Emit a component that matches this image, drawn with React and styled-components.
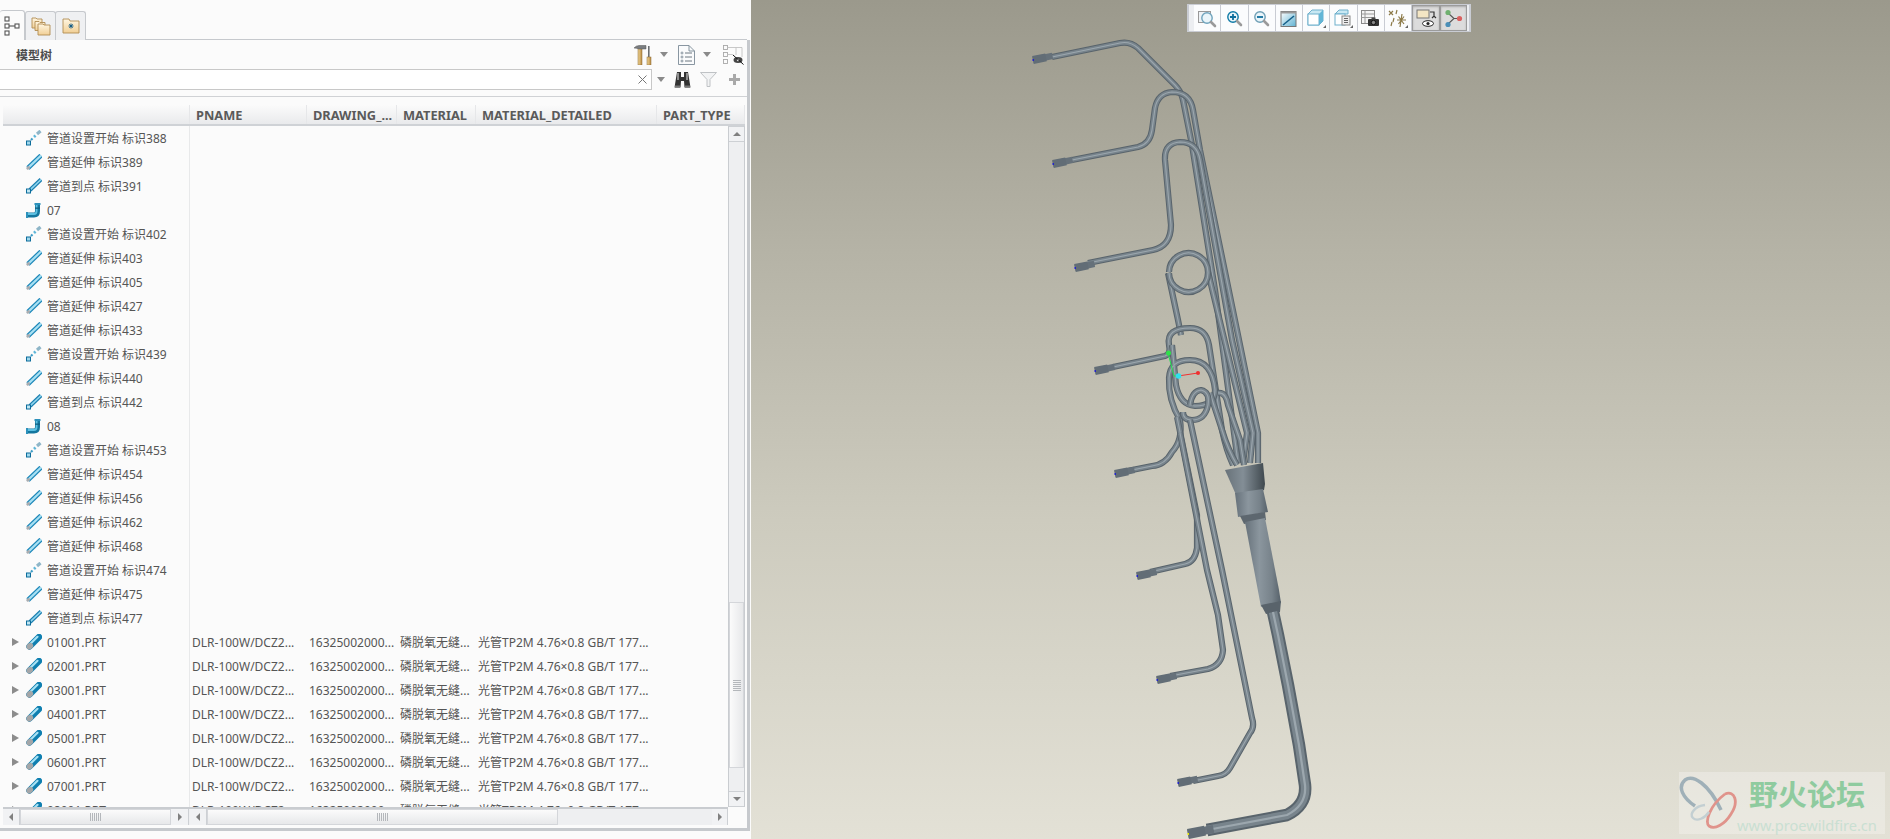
import React from "react";
import styled, { createGlobalStyle } from "styled-components";

const Global = createGlobalStyle`
  html, body { margin: 0; padding: 0; background: #fbfbfb; }
  body { font-family: "Noto Sans", "Noto Sans CJK SC", sans-serif; font-size: 12px; color: #555; }
`;

const Page = styled.div`
  display: flex; width: 1890px; height: 839px; overflow: hidden;
`;
const Panel = styled.aside`
  width: 751px; flex: none; height: 839px; background: #fbfbfb;
  display: flex; flex-direction: column; box-sizing: border-box;
`;
const TabStrip = styled.div`
  height: 40px; box-sizing: border-box; padding-top: 10px; display: flex; align-items: flex-end;
  border-bottom: 1px solid #c6c9cd; margin-right: 4px;
`;
const Tab = styled.div`
  width: ${p => p.$w}px; box-sizing: border-box; display: flex; align-items: center; justify-content: center;
  border: 1px solid #c6c9cd; border-left: ${p => p.$active ? "none" : "1px solid #c6c9cd"};
  border-bottom: none; border-radius: 3px 3px 0 0; margin-bottom: -1px; margin-right: ${p => p.$active ? 0 : -1}px;
  background: ${p => p.$active ? "#fbfbfb" : "#eff0f2"};
  height: ${p => p.$active ? 30 : 29}px;
`;
const Frame = styled.div`
  height: 788px; width: 747px; border-right: 3px solid #c6c9cd; border-bottom: 3px solid #c6c9cd;
  display: flex; flex-direction: column; box-sizing: content-box;
`;
const TitleRow = styled.div`
  height: 29px; display: flex; align-items: center; padding: 0 3px 0 16px;
`;
const Title = styled.span`
  font-weight: 700; font-size: 12px; color: #4d4d4d; margin-right: auto;
`;
const ToolIcon = styled.span`
  display: inline-flex; margin-left: ${p => p.$ml || 0}px;
`;
const Caret = styled.span`
  width: 0; height: 0; border-left: 4px solid transparent; border-right: 4px solid transparent; border-top: 5px solid #8a8a8a;
  margin-left: ${p => p.$ml}px;
`;
const SearchRow = styled.div`
  height: 21px; display: flex; align-items: center;
`;
const SearchBox = styled.div`
  width: 652px; height: 21px; box-sizing: border-box; border: 1px solid #c8c8c8; border-left: none; background: #fff;
  display: flex; align-items: center; justify-content: flex-end; padding-right: 4px; flex: none;
`;
const Divider = styled.div`
  height: 1px; background: #d0d2d5; margin-top: 6px;
`;
const Table = styled.div`
  margin: 8px 2px 0 3px; flex: 1; display: flex; flex-direction: column; min-height: 0;
`;
const HeadRow = styled.div`
  display: grid; grid-template-columns: 187px 117px 90px 79px 181px 1fr; height: 21px; flex: none; box-sizing: border-box;
  background: linear-gradient(#fbfbfb, #e9eaec); border-bottom: 2px solid #cfd2d6;
`;
const HeadCell = styled.div`
  font-weight: 700; font-size: 12.8px; color: #5a5a5a; padding-left: ${p => p.$first ? 0 : 6}px; line-height: 21px; white-space: nowrap;
  border-right: 1px solid #e6e7e9; overflow: hidden;
`;
const BodyWrap = styled.div`
  height: 681px; display: flex; flex: none;
`;
const Rows = styled.div`
  width: 725px; height: 681px; overflow: hidden; flex: none;
  background: linear-gradient(to right, transparent 186px, #e8e9ea 186px, #e8e9ea 187px, transparent 187px);
`;
const Row = styled.div`
  display: grid; grid-template-columns: 187px 117px 90px 79px 181px 1fr; height: 24px; align-items: center;
`;
const TreeCell = styled.div`
  display: flex; align-items: center; padding-left: 9px; height: 24px; white-space: nowrap;
`;
const Expander = styled.span`
  width: 0; height: 0; border-top: 4px solid transparent; border-bottom: 4px solid transparent; border-left: 7px solid #8c8c8c;
  margin-right: 7px;
`;
const NoExpander = styled.span`width: 14px; flex: none;`;
const Label = styled.span`margin-left: 5px; font-size: 12px; color: #555;`;
const Cell = styled.div`
  white-space: nowrap; overflow: hidden; padding-left: ${p => p.$pad}px; font-size: 12px; color: #555;
`;
const VScroll = styled.div`
  width: 17px; flex: none; height: 681px; display: flex; flex-direction: column; background: #eeeff1;
  border-left: 1px solid #c9ccd0; border-right: 1px solid #c9ccd0; box-sizing: border-box;
`;
const VButton = styled.div`
  height: 16px; flex: none; display: flex; align-items: center; justify-content: center; background: #f1f2f4;
  border-bottom: 1px solid #cdd0d4; border-top: 1px solid #cdd0d4; box-sizing: border-box;
`;
const ArrowUp = styled.span`
  width: 0; height: 0; border-left: 4px solid transparent; border-right: 4px solid transparent; border-bottom: 4px solid #808080;
`;
const ArrowDown = styled.span`
  width: 0; height: 0; border-left: 4px solid transparent; border-right: 4px solid transparent; border-top: 4px solid #808080;
`;
const VTrack = styled.div`
  flex: 1; padding-top: 460px; display: flex; flex-direction: column; box-sizing: border-box;
`;
const VThumb = styled.div`
  height: 166px; background: linear-gradient(to right, #fbfbfb, #e7e8ea); border: 1px solid #d4d6da; box-sizing: border-box;
  display: flex; align-items: center; justify-content: center; flex: none; margin-bottom: 23px;
`;
const GripV = styled.div`
  width: 8px; height: 11px;
  background: repeating-linear-gradient(to bottom, #b4b7bb 0, #b4b7bb 1px, transparent 1px, transparent 2px);
`;
const GripH = styled.div`
  width: 11px; height: 8px;
  background: repeating-linear-gradient(to right, #b4b7bb 0, #b4b7bb 1px, transparent 1px, transparent 2px);
`;
const HBar = styled.div`
  height: 18px; display: flex; flex: none; box-sizing: border-box; border-top: 2px solid #c9ccd0; width: 725px; background: #eeeff1;
`;
const HSeg = styled.div`
  display: flex; width: ${p => p.$w}px; flex: none; margin-right: ${p => p.$mr || 0}px;
`;
const HButton = styled.div`
  width: ${p => p.$w}px; flex: none; display: flex; align-items: center; justify-content: center; background: #f1f2f4;
  border-right: 1px solid #cdd0d4; box-sizing: border-box;
`;
const ArrowL = styled.span`
  width: 0; height: 0; border-top: 4px solid transparent; border-bottom: 4px solid transparent; border-right: 4px solid #808080;
`;
const ArrowR = styled.span`
  width: 0; height: 0; border-top: 4px solid transparent; border-bottom: 4px solid transparent; border-left: 4px solid #808080;
`;
const HThumb = styled.div`
  width: ${p => p.$w}px; flex: none; background: linear-gradient(#fbfbfb, #e7e8ea); border: 1px solid #d4d6da; box-sizing: border-box;
  display: flex; align-items: center; justify-content: center;
`;
const HSpacer = styled.div`flex: 1;`;

const Viewport = styled.main`
  flex: 1; position: relative; height: 839px; overflow: hidden;
  background: linear-gradient(#9b998c 0%, #b5b3a6 30%, #cdcbbe 62%, #e3e1d6 100%);
`;
const Scene = styled.svg`
  display: block; width: 1139px; height: 839px;
`;
const Toolbar = styled.div`
  position: absolute; left: 436px; top: 4px; height: 28px; width: 284px; box-sizing: border-box;
  display: flex; padding: 0 5px; background: #eceef1; border: 2px solid #c9ccd3; border-width: 1px 2px;
`;
const ToolButton = styled.div`
  width: 27.3px; flex: none; display: flex; align-items: center; justify-content: center; box-sizing: border-box; background: ${p => p.$on ? "#dcdcdc" : "#fbfcfd"};
  border-right: 1px solid #c9ccd3; ${p => p.$on ? "border: 1px solid #9b9b9b; box-shadow: inset 0 1px 2px #aaa;" : ""}
`;
const Watermark = styled.div`
  position: absolute; right: 5px; bottom: 5px; width: 206px; height: 62px; background: rgba(255,255,255,.28);
  display: flex;
`;
const Butterfly = styled.svg`
  width: 58px; height: 62px; flex: none;
`;
const WmText = styled.div`
  display: flex; flex-direction: column; flex: 1; align-items: flex-start; min-width: 0;
`;
const WmTitle = styled.div`
  font: 700 29px "Noto Sans CJK SC", sans-serif; color: #8fcb9f; line-height: 32px; margin: 5px 0 0 12px; white-space: nowrap;
`;
const WmUrl = styled.div`
  font: 14.6px "Noto Sans", sans-serif; color: #c9dfd2; white-space: nowrap; margin: 6px 0 0 0; line-height: 20px;
`;

const Grads = () => (
  <svg width="0" height="0" style={{ position: "absolute" }}>
    <defs>
      <linearGradient id="folder" x1="0" y1="0" x2="0" y2="1">
        <stop offset="0" stopColor="#fff6e2" /><stop offset="1" stopColor="#f1cf95" />
      </linearGradient>
      <linearGradient id="collar" x1="0" y1="0" x2="1" y2="0">
        <stop offset="0" stopColor="#687279" /><stop offset=".45" stopColor="#838e96" /><stop offset="1" stopColor="#3f484e" />
      </linearGradient>
      <linearGradient id="sleeve" x1="0" y1="0" x2="1" y2="0">
        <stop offset="0" stopColor="#66717a" /><stop offset=".4" stopColor="#8b969e" /><stop offset=".75" stopColor="#77828a" /><stop offset="1" stopColor="#56616a" />
      </linearGradient>
      <linearGradient id="wood" x1="0" y1="0" x2="1" y2="0">
        <stop offset="0" stopColor="#f0d594" /><stop offset="1" stopColor="#b98b43" />
      </linearGradient>
      <linearGradient id="shade" x1="0" y1="0" x2="1" y2="1">
        <stop offset="0" stopColor="#ffffff" /><stop offset="1" stopColor="#5fb2d2" />
      </linearGradient>
    </defs>
  </svg>
);

const IconStart = () => (
  <svg width="16" height="16" viewBox="0 0 16 16">
    <rect x=".5" y="11" width="4" height="4" fill="#9fd7ec" stroke="#0d6d9b" />
    <path d="M5 10 L6.5 8.5" stroke="#3d9cc6" strokeWidth="2.2" />
    <path d="M8 7 L9.5 5.5" stroke="#5fb6d8" strokeWidth="2.6" />
    <path d="M11 4 L14.5 1" stroke="#8fb6c8" strokeWidth="3.2" />
  </svg>
);
const IconExtend = () => (
  <svg width="16" height="16" viewBox="0 0 16 16">
    <path d="M2 14 L15 1.5" stroke="#1b86b8" strokeWidth="4.6" />
    <path d="M2.4 13.6 L15 1.5" stroke="#a7e0f3" strokeWidth="2.2" />
    <ellipse cx="2.2" cy="13.8" rx="1.6" ry="2" transform="rotate(45 2.2 13.8)" fill="#a9adb1" />
  </svg>
);
const IconTo = () => (
  <svg width="16" height="16" viewBox="0 0 16 16">
    <path d="M4 12 L15 1.5" stroke="#1b7fb0" strokeWidth="4" />
    <path d="M4.6 11.4 L15 1.5" stroke="#8fd5ee" strokeWidth="1.6" />
    <rect x=".5" y="11" width="4" height="4" fill="#bfe6f3" stroke="#0d6d9b" />
  </svg>
);
const IconBend = () => (
  <svg width="16" height="17" viewBox="0 0 16 17">
    <path d="M1 13 H8 Q11.5 13 11.5 9 V2" fill="none" stroke="#14779f" strokeWidth="5" />
    <path d="M1 12 H8 Q10.6 12 10.6 9 V2" fill="none" stroke="#5cc0e2" strokeWidth="1.8" />
    <rect x="8.5" y="1" width="6" height="2" fill="#2d91bb" /><rect x="9" y="5.5" width="5" height="1.3" fill="#0f5f82" />
    <rect x="0" y="10" width="2" height="6" fill="#2d91bb" />
  </svg>
);
const IconPart = () => (
  <svg width="16" height="16" viewBox="0 0 16 16">
    <path d="M3.5 12.5 L13 3" stroke="#0f7fb0" strokeWidth="6.4" strokeLinecap="round" />
    <path d="M3.2 11 L11.5 2.8" stroke="#a8e2f4" strokeWidth="2.2" strokeLinecap="round" />
    <ellipse cx="3.8" cy="12.2" rx="3" ry="3.6" transform="rotate(45 3.8 12.2)" fill="#a4a6a8" />
  </svg>
);
const rowIcons = { s: IconStart, e: IconExtend, t: IconTo, b: IconBend, p: IconPart };

const TreeTabIcon = () => (
  <svg width="17" height="20" viewBox="0 0 17 20" fill="#fff" stroke="#555" strokeWidth="1.1">
    <rect x="1" y="1" width="4" height="4" /><rect x="1" y="8" width="4" height="4" /><rect x="1" y="15" width="4" height="4" />
    <rect x="11" y="8" width="4" height="4" /><path d="M5 10 H11" fill="none" />
  </svg>
);
const FoldersIcon = () => (
  <svg width="20" height="20" viewBox="0 0 20 20" stroke="#b18c52" strokeWidth=".9" fill="url(#folder)">
    <path d="M1 2 h4 l1 1 h5 v9 h-10 z" /><path d="M4 5.5 h4 l1 1 h5 v8 h-10 z" /><path d="M7 8 h5 l1 1 h6 v10 h-12 z" />
  </svg>
);
const StarFolderIcon = () => (
  <svg width="18" height="16" viewBox="0 0 18 16" stroke="#b18c52" strokeWidth=".9" fill="url(#folder)">
    <path d="M1 1 h6 l1 2 h9 v12 h-16 z" />
    <path d="M9 5.5 v5 M6.5 8 h5 M7.3 6.3 l3.4 3.4 M10.7 6.3 l-3.4 3.4" stroke="#155d87" strokeWidth="1" fill="none" />
  </svg>
);
const ToolsIcon = () => (
  <svg width="18" height="20" viewBox="0 0 18 20">
    <rect x="4" y="3" width="4" height="17" fill="url(#wood)" stroke="#8a6a35" strokeWidth=".5" />
    <path d="M0 3 Q2 .5 5 .5 H12 V4 H5 Q2 3 0 3 Z" fill="#7a7d80" stroke="#555" strokeWidth=".5" />
    <rect x="14" y="1" width="1.6" height="11" fill="#6b6e71" />
    <rect x="13" y="12" width="4" height="8" fill="url(#wood)" stroke="#8a6a35" strokeWidth=".5" />
  </svg>
);
const DocListIcon = () => (
  <svg width="17" height="20" viewBox="0 0 17 20" fill="none" stroke="#7c8a96" strokeWidth=".9">
    <path d="M.5 .5 H11 L16.5 6 V19.5 H.5 Z" fill="#fafbfc" /><path d="M11 .5 V6 H16.5" />
    <circle cx="4" cy="8" r="1" /><circle cx="4" cy="12" r="1" /><circle cx="4" cy="16" r="1" />
    <path d="M7 8 H14 M7 12 H14 M7 16 H14" stroke="#5f6a74" />
  </svg>
);
const TreeEyeIcon = () => (
  <svg width="21" height="20" viewBox="0 0 21 20" fill="none" stroke="#a8a8a8" strokeWidth=".9">
    <rect x=".5" y=".5" width="4" height="4" /><rect x=".5" y="7.5" width="4" height="4" /><rect x=".5" y="14.5" width="4" height="4" />
    <path d="M4.5 2.5 H19 V12 M13 2.5 V10 M4.5 9.5 H10" stroke="#c2c2c2" />
    <ellipse cx="15" cy="15" rx="4.5" ry="3" fill="#444" stroke="none" /><circle cx="15" cy="15" r="1.2" fill="#ddd" stroke="none" />
    <path d="M10 10 L20.5 19.5" stroke="#111" strokeWidth="1" />
  </svg>
);
const ClearIcon = () => (
  <svg width="9" height="9" viewBox="0 0 9 9"><path d="M.5 .5 L8.5 8.5 M8.5 .5 L.5 8.5" stroke="#777" strokeWidth="1" /></svg>
);
const BinocIcon = () => (
  <svg width="17" height="16" viewBox="0 0 17 16">
    <path d="M3 0 H7 V5 H10 V0 H14 L16.5 15.5 H10.5 L10 9 H7 L6.5 15.5 H.5 Z" fill="#333" />
    <path d="M4 1 V8 M13 1 V8" stroke="#a5a5a5" strokeWidth="1.6" />
    <rect x="1" y="13.5" width="5" height="2" fill="#777" /><rect x="11" y="13.5" width="5" height="2" fill="#777" />
  </svg>
);
const FunnelIcon = () => (
  <svg width="17" height="15" viewBox="0 0 17 15"><path d="M.5 .5 H16.5 L10 7.5 V14.5 H7 V7.5 Z" fill="#f2f3f4" stroke="#bfc2c5" /></svg>
);
const PlusIcon = () => (
  <svg width="11" height="11" viewBox="0 0 11 11"><path d="M5.5 0 V11 M0 5.5 H11" stroke="#a9a9a9" strokeWidth="3" /></svg>
);
const Lens = ({ c = "#6fa4bd", sign }) => (
  <g>
    <circle cx="9" cy="9" r="5.2" fill="#eaf5fa" stroke={c} strokeWidth="1.4" />
    <path d="M13 13 L17 17" stroke="#9a9a9a" strokeWidth="2.6" strokeLinecap="round" />
    {sign && <path d={sign} stroke="#0e6f9c" strokeWidth="1.8" />}
  </g>
);
const Corner = () => <path d="M20 20 H17 L20 17 Z" fill="#666" />;
const Ico = ({ children }) => <svg width="21" height="21" viewBox="0 0 21 21">{children}</svg>;
const toolIcons = [
  <Ico><rect x="1.5" y="3.5" width="12" height="11" fill="#eef2f5" stroke="#999" /><g transform="translate(1 1)"><Lens /></g></Ico>,
  <Ico><Lens c="#0f7aa6" sign="M6 9 H12 M9 6 V12" /></Ico>,
  <Ico><Lens c="#6f9fb5" sign="M6 9 H12" /></Ico>,
  <Ico><rect x="2" y="3.5" width="15" height="15" fill="url(#shade)" stroke="#777" /><rect x="2" y="3.5" width="15" height="2" fill="#999" /><path d="M4 17 L15 8" stroke="#15608a" strokeWidth="1.6" /></Ico>,
  <Ico><path d="M2 6 L6 2 H17 V13 L13 17 H2 Z" fill="#c8e8f3" stroke="#6fb0cc" /><rect x="2" y="6" width="11" height="11" fill="#fff" stroke="#6fb0cc" /><path d="M13 6 L17 2 V13 L13 17 Z" fill="#63b6d6" /><Corner /></Ico>,
  <Ico><path d="M2 6 L6 2 H15 V6 H2 Z" fill="#c8e8f3" stroke="#6fb0cc" /><rect x="2" y="6" width="10" height="11" fill="#fff" stroke="#6fb0cc" /><rect x="9" y="8" width="8" height="9" fill="#eee" stroke="#888" /><path d="M11 10.5 H15 M11 12.5 H15 M11 14.5 H15" stroke="#666" /><Corner /></Ico>,
  <Ico><rect x="1.5" y="2.5" width="13" height="13" fill="#f4f4f4" stroke="#8a8a8a" /><path d="M1.5 6 H14 M1.5 9.5 H14 M5 2.5 V15" stroke="#9a9a9a" /><rect x="8" y="11" width="11" height="7" rx="1" fill="#333" /><circle cx="13.5" cy="14.5" r="2.2" fill="#888" stroke="#111" /><rect x="11.5" y="9.5" width="4" height="2" fill="#444" /></Ico>,
  <Ico><path d="M1 3 L5 7 M5 3 L1 7 M9 2 L8 6 M6 10 L5 14 M4 14 L3 18 M14 6 L12 19 M9 12 H18 M10.5 8.5 L16 16 M16 8.5 L10.5 16" stroke="#8c7a48" strokeWidth="1.2" fill="none" /><Corner /></Ico>,
  <Ico><rect x="1" y="2" width="12" height="8" fill="#f4e6c4" stroke="#777" /><path d="M14 4 H18 V8 M16 10 L18 8 L20 10" stroke="#333" fill="none" strokeWidth="1.2" /><ellipse cx="12" cy="15.5" rx="5.5" ry="2.8" fill="#fff" stroke="#222" /><circle cx="12" cy="15.5" r="1.6" fill="#222" /></Ico>,
  <Ico><path d="M5 5 L11 10.5 L5 16 M11 10.5 H17" stroke="#555" fill="none" strokeWidth="1.1" /><circle cx="5" cy="4.5" r="2.6" fill="#6fb06f" /><circle cx="5" cy="16.5" r="2.6" fill="#4a8fb8" /><circle cx="16.5" cy="10.5" r="2.6" fill="#d96060" /></Ico>,
];

const Pipe = ({ d, w = 6.2 }) => (
  <g fill="none" strokeLinejoin="round">
    <path d={d} stroke="#59646c" strokeWidth={w} />
    <path d={d} stroke="#78848c" strokeWidth={w * 0.68} />
    <path d={d} stroke="#9ca7ae" strokeWidth={w * 0.18} />
  </g>
);
const Tip = ({ x, y, dx = 13, dy = -2.7, w = 8, flag = "#2222cc" }) => (
  <g>
    <path d={`M${x} ${y} L${x + dx * 1.5} ${y + dy * 1.5}`} stroke="#66717a" strokeWidth={w * 0.8} />
    <path d={`M${x} ${y} L${x + dx} ${y + dy}`} stroke="#626d76" strokeWidth={w} />
    <rect x={x - 0.5} y={y - 1} width="1.5" height="2" fill={flag} />
  </g>
);

const pipes = [
  "M1052 57 L1120 43 Q1130 41 1138 48 L1175 85 Q1181 91 1183 100 L1192 145 L1215 290 L1238 463",
  "M1072 160 L1138 147 Q1150 144 1152 130 L1155 108 Q1158 93 1172 92 Q1190 92 1193 110 L1200 150 L1237 330 L1258 433 L1258 463",
  "M1088 263 L1153 250 Q1171 246 1171 225 L1165 160 Q1164 143 1180 142 Q1197 142 1200 160 L1232 340 L1253 433 L1250 463",
  "M1208 272 L1222 330 L1247 433 L1243 463",
  "M1168 273 L1178 320 L1181 335",
  "M1169 272 A19.5 19.5 0 1 1 1169 273",
  "M1113 367 L1165 356 Q1171 354 1169 345 Q1166 328 1190 328 Q1206 328 1209 345 L1222 430 Q1226 450 1233 465",
  "M1172 345 L1176 385 Q1180 405 1195 406 Q1215 406 1215 390 Q1212 360 1190 360 Q1170 360 1169 378 Q1168 400 1180 420 Q1183 440 1172 452 Q1165 465 1152 466 L1127 471",
  "M1210 393 L1222 430 Q1228 450 1237 465",
  "M1218 393 Q1226 392 1228 405 L1240 440 L1244 465",
  "M1190 405 Q1192 391 1201 390 Q1210 392 1208 405 Q1205 420 1192 420 Q1183 420 1183 412",
  "M1190 420 L1222 570 L1252 718 Q1255 727 1250 733 L1230 768 Q1226 775 1218 776 L1193 781",
  "M1177 417 L1197 515 L1197 548 Q1195 562 1185 564 L1150 572",
  "M1180 433 L1207 570 L1218 615 L1223 650 Q1222 665 1208 669 L1170 676",
];
const tips = [[1033, 60], [1053, 164], [1075, 268], [1095, 371], [1115, 474], [1137, 576], [1157, 680], [1178, 783]];

const treeRows = [
  ["s", "管道设置开始 标识388"], ["e", "管道延伸 标识389"], ["t", "管道到点 标识391"], ["b", "07"],
  ["s", "管道设置开始 标识402"], ["e", "管道延伸 标识403"], ["e", "管道延伸 标识405"], ["e", "管道延伸 标识427"], ["e", "管道延伸 标识433"],
  ["s", "管道设置开始 标识439"], ["e", "管道延伸 标识440"], ["t", "管道到点 标识442"], ["b", "08"],
  ["s", "管道设置开始 标识453"], ["e", "管道延伸 标识454"], ["e", "管道延伸 标识456"], ["e", "管道延伸 标识462"], ["e", "管道延伸 标识468"],
  ["s", "管道设置开始 标识474"], ["e", "管道延伸 标识475"], ["t", "管道到点 标识477"],
];
const partRows = ["01001", "02001", "03001", "04001", "05001", "06001", "07001", "08001"];

export default function App() {
  return (
    <Page>
      <Global />
      <Grads />
      <Panel>
        <TabStrip>
          <Tab $w={25} $active><TreeTabIcon /></Tab>
          <Tab $w={31}><FoldersIcon /></Tab>
          <Tab $w={31}><StarFolderIcon /></Tab>
        </TabStrip>
        <Frame>
          <TitleRow>
            <Title>模型树</Title>
            <ToolIcon><ToolsIcon /></ToolIcon>
            <Caret $ml={8} />
            <ToolIcon $ml={10}><DocListIcon /></ToolIcon>
            <Caret $ml={8} />
            <ToolIcon $ml={12}><TreeEyeIcon /></ToolIcon>
          </TitleRow>
          <SearchRow>
            <SearchBox><ClearIcon /></SearchBox>
            <Caret $ml={5} />
            <ToolIcon $ml={9}><BinocIcon /></ToolIcon>
            <ToolIcon $ml={9}><FunnelIcon /></ToolIcon>
            <ToolIcon $ml={12}><PlusIcon /></ToolIcon>
          </SearchRow>
          <Divider />
          <Table>
            <HeadRow>
              <HeadCell $first />
              <HeadCell>PNAME</HeadCell>
              <HeadCell>DRAWING_...</HeadCell>
              <HeadCell>MATERIAL</HeadCell>
              <HeadCell>MATERIAL_DETAILED</HeadCell>
              <HeadCell>PART_TYPE</HeadCell>
            </HeadRow>
            <BodyWrap>
              <Rows>
                {treeRows.map(([k, t], i) => {
                  const I = rowIcons[k];
                  return (
                    <Row key={i}>
                      <TreeCell><NoExpander /><I /><Label>{t}</Label></TreeCell>
                    </Row>
                  );
                })}
                {partRows.map(p => (
                  <Row key={p}>
                    <TreeCell><Expander /><IconPart /><Label>{p}.PRT</Label></TreeCell>
                    <Cell $pad={2}>DLR-100W/DCZ2...</Cell>
                    <Cell $pad={2}>16325002000...</Cell>
                    <Cell $pad={3}>磷脱氧无缝...</Cell>
                    <Cell $pad={2}>光管TP2M 4.76×0.8 GB/T 177...</Cell>
                  </Row>
                ))}
              </Rows>
              <VScroll>
                <VButton><ArrowUp /></VButton>
                <VTrack><VThumb><GripV /></VThumb></VTrack>
                <VButton><ArrowDown /></VButton>
              </VScroll>
            </BodyWrap>
            <HBar>
              <HSeg $w={186} $mr={1}>
                <HButton $w={17}><ArrowL /></HButton>
                <HThumb $w={151}><GripH /></HThumb>
                <HButton $w={18}><ArrowR /></HButton>
              </HSeg>
              <HSeg $w={538}>
                <HButton $w={17}><ArrowL /></HButton>
                <HThumb $w={351}><GripH /></HThumb>
                <HSpacer />
                <HButton $w={16}><ArrowR /></HButton>
              </HSeg>
            </HBar>
          </Table>
        </Frame>
      </Panel>
      <Viewport>
        <Scene viewBox="751 0 1139 839">
          {pipes.map((d, i) => <Pipe key={i} d={d} />)}
          {tips.map(([x, y]) => <Tip key={x} x={x} y={y} />)}
          <polygon points="1225,470 1263,463 1265,484 1264,490 1237,497" fill="url(#collar)" />
          <polygon points="1235,493 1263,489 1268,512 1238,517" fill="url(#sleeve)" />
          <polygon points="1240,516 1265,512 1266,520 1244,524" fill="#5d676f" />
          <polygon points="1245,522 1265,518 1279,590 1281,603 1261,607" fill="url(#sleeve)" />
          <polygon points="1261,605 1281,601 1280,612 1266,614" fill="#59636b" />
          <Pipe d="M1273 612 L1278 635 L1288 685 L1299 745 L1305 785 Q1307 805 1287 815 L1207 830" w={12.5} />
          <Tip x={1188} y={834} dx={17} dy={-3.4} flag="#e6e600" w={10} />
          <path d="M1168 353 L1174 376 H1178" stroke="#22e052" strokeWidth="1" fill="none" />
          <path d="M1178 376 L1198 373" stroke="#f03030" strokeWidth="1" />
          <circle cx="1168.5" cy="353" r="2.5" fill="#2fe04a" />
          <circle cx="1198" cy="373" r="2" fill="#ef2f2f" />
          <circle cx="1178.5" cy="376" r="2.8" fill="#2fe0ee" />
        </Scene>
        <Toolbar>
          {toolIcons.map((ic, i) => <ToolButton key={i} $on={i >= 8}>{ic}</ToolButton>)}
        </Toolbar>
        <Watermark>
          <Butterfly viewBox="0 0 58 62" fill="none">
            <path d="M42 38 C30 12 14 2 6 8 C-2 15 4 26 16 34" stroke="#9fb0b8" strokeWidth="3.5" />
            <path d="M46 22 C56 18 60 30 52 42 C46 52 36 58 30 54 C26 50 30 34 46 22" stroke="#e0938b" strokeWidth="2.8" />
            <path d="M26 33 C16 34 10 42 14 46 C18 50 26 46 30 40" stroke="#c3cfd2" strokeWidth="2.4" />
          </Butterfly>
          <WmText>
            <WmTitle>野火论坛</WmTitle>
            <WmUrl>www.proewildfire.cn</WmUrl>
          </WmText>
        </Watermark>
      </Viewport>
    </Page>
  );
}
